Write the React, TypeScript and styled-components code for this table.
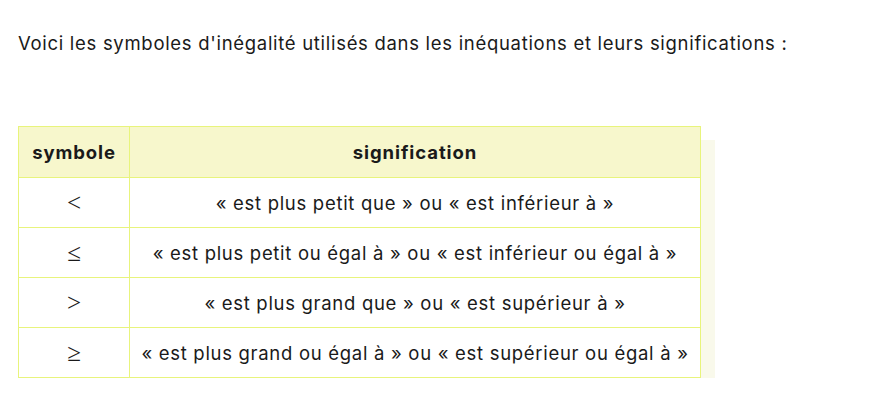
import styled, { createGlobalStyle } from 'styled-components';

const GlobalStyle = createGlobalStyle`
  body {
    margin: 0;
    background: #ffffff;
    font-family: Inter, "Noto Sans", sans-serif;
    color: #1a1a1a;
  }
`;

interface RowData {
  symbol: string
  meaning: string
};

const rows: readonly RowData[] = [
  { symbol: '<', meaning: '« est plus petit que » ou « est inférieur à »' },
  { symbol: '≤', meaning: '« est plus petit ou égal à » ou « est inférieur ou égal à »' },
  { symbol: '>', meaning: '« est plus grand que » ou « est supérieur à »' },
  { symbol: '≥', meaning: '« est plus grand ou égal à » ou « est supérieur ou égal à »' },
];

const App = () => {
  return (
    <Page>
      <GlobalStyle />
      <Intro>Voici les symboles d'inégalité utilisés dans les inéquations et leurs significations :</Intro>
      <Table>
        <thead>
          <tr>
            <HeadCell $narrow>symbole</HeadCell>
            <HeadCell>signification</HeadCell>
          </tr>
        </thead>
        <tbody>
          {
            rows.map(({ symbol, meaning }) => (
              <tr key={symbol}>
                <SymbolCell>{ symbol }</SymbolCell>
                <Cell>{ meaning }</Cell>
              </tr>
            ))
          }
        </tbody>
      </Table>
    </Page>
  );
};

const Page = styled.div`
  padding: 30px 18px 0;
`;

const Intro = styled.p`
  margin: 0 0 70px;
  font-size: 18.5px;
  letter-spacing: 0.7px;
  line-height: 26px;
  white-space: nowrap;
`;

const Table = styled.table`
  width: 683px;
  border-collapse: collapse;
  box-shadow: 14px 14px 0 #f9f9eb;
`;

const HeadCell = styled.th<{ $narrow?: boolean }>`
  width: ${ props => props.$narrow ? '110px' : 'auto' };
  height: 50px;
  padding: 0;
  background: #f7f7cc;
  border: 1px solid #e8f47c;
  font-size: 18.5px;
  letter-spacing: 0.9px;
  font-weight: 700;
  text-align: center;
`;

const Cell = styled.td`
  height: 49px;
  padding: 0;
  border: 1px solid #e8f47c;
  background: #ffffff;
  font-size: 18.5px;
  letter-spacing: 0.7px;
  text-align: center;
  white-space: nowrap;
`;

const SymbolCell = styled(Cell)`
  font-family: "Liberation Serif", "DejaVu Serif", serif;
  font-size: 25px;
  letter-spacing: 0;
`;

export default App;
